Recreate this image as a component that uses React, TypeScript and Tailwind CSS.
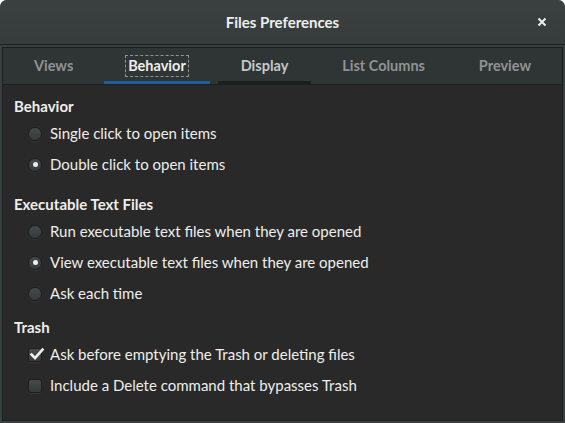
import React from "react";

const font = { fontFamily: "Lato, 'Noto Sans', sans-serif" };

function Radio({ checked, label }: { checked?: boolean; label: string }) {
  return (
    <div className="flex items-center h-[31px]">
      <div className="ml-[25px] w-[14px] h-[14px] rounded-full border border-[#1c1f1f] bg-gradient-to-b from-[#454b4c] to-[#353b3b] flex items-center justify-center shadow-[0_1px_0_rgba(255,255,255,0.06)]">
        {checked && <div className="w-[5px] h-[5px] rounded-full bg-[#eeeeec]" />}
      </div>
      <span className="ml-[8px] text-[#eeeeec] text-[15px]">{label}</span>
    </div>
  );
}

function Check({ checked, label }: { checked?: boolean; label: string }) {
  return (
    <div className="flex items-center h-[31px]">
      <div className="ml-[25px] w-[14px] h-[14px] rounded-[3px] border border-[#1c1f1f] bg-gradient-to-b from-[#454b4c] to-[#353b3b] flex items-center justify-center relative shadow-[0_1px_0_rgba(255,255,255,0.06)]">
        {checked && (
          <svg width="16" height="14" viewBox="0 0 16 14" className="absolute left-[0px] -top-[2px]">
            <path d="M2.5 7.5 L6 11 L13.5 2.5" stroke="#eeeeec" strokeWidth="2.6" fill="none" strokeLinecap="square" />
          </svg>
        )}
      </div>
      <span className="ml-[8px] text-[#eeeeec] text-[15px]">{label}</span>
    </div>
  );
}

function Header({ children }: { children: React.ReactNode }) {
  return <div className="pl-[11px] text-[#eeeeec] font-bold text-[15px] h-[24px] flex items-center">{children}</div>;
}

export default function App() {
  const tabs = ["Views", "Behavior", "Display", "List Columns", "Preview"];
  return (
    <div style={font} className="w-[565px] h-[423px] bg-[#393f3f] rounded-t-[7px] overflow-hidden flex flex-col">
      <div className="h-[45px] shrink-0 flex items-center justify-center relative border-b border-[#1c1f1f] bg-gradient-to-b from-[#3b4141] to-[#363b3c]">
        <span className="text-[#eeeeec] font-bold text-[15px]">Files Preferences</span>
        <svg className="absolute left-[537px] top-[17px]" width="10" height="10" viewBox="0 0 10 10">
          <path d="M1.5 1.5 L8.5 8.5 M8.5 1.5 L1.5 8.5" stroke="#eeeeec" strokeWidth="2" />
        </svg>
      </div>
      <div className="flex-1 flex flex-col px-[2px] pt-[2px] pb-[2px]">
        <div className="flex-1 flex flex-col border border-[#1c1f1f]">
          <div className="h-[37px] shrink-0 flex px-[8px] gap-[8px] bg-[#2f3434] border-b border-[#1c1f1f]">
            {tabs.map((t) => {
              const sel = t === "Behavior";
              const hov = t === "Display";
              return (
                <div
                  key={t}
                  className={
                    "flex-auto flex items-center justify-center pt-[3px] text-[14.5px] font-bold border-b-[3px] " +
                    (sel
                      ? "border-[#215d9c] text-[#eeeeec]"
                      : hov
                      ? "border-[#1c1f1f] text-[#c6c8c8]"
                      : "border-transparent text-[#8f9393]")
                  }
                >
                  <span className={sel ? "outline outline-1 outline-dashed outline-[#8f9393] outline-offset-[1px] px-[1px] leading-[18px]" : ""}>{t}</span>
                </div>
              );
            })}
          </div>
          <div className="flex-1 bg-[#292929] pt-[9px]">
            <Header>Behavior</Header>
            <Radio label="Single click to open items" />
            <Radio checked label="Double click to open items" />
            <div className="h-[12px]" />
            <Header>Executable Text Files</Header>
            <Radio label="Run executable text files when they are opened" />
            <Radio checked label="View executable text files when they are opened" />
            <Radio label="Ask each time" />
            <div className="h-[6px]" />
            <Header>Trash</Header>
            <Check checked label="Ask before emptying the Trash or deleting files" />
            <Check label="Include a Delete command that bypasses Trash" />
          </div>
        </div>
      </div>
    </div>
  );
}
